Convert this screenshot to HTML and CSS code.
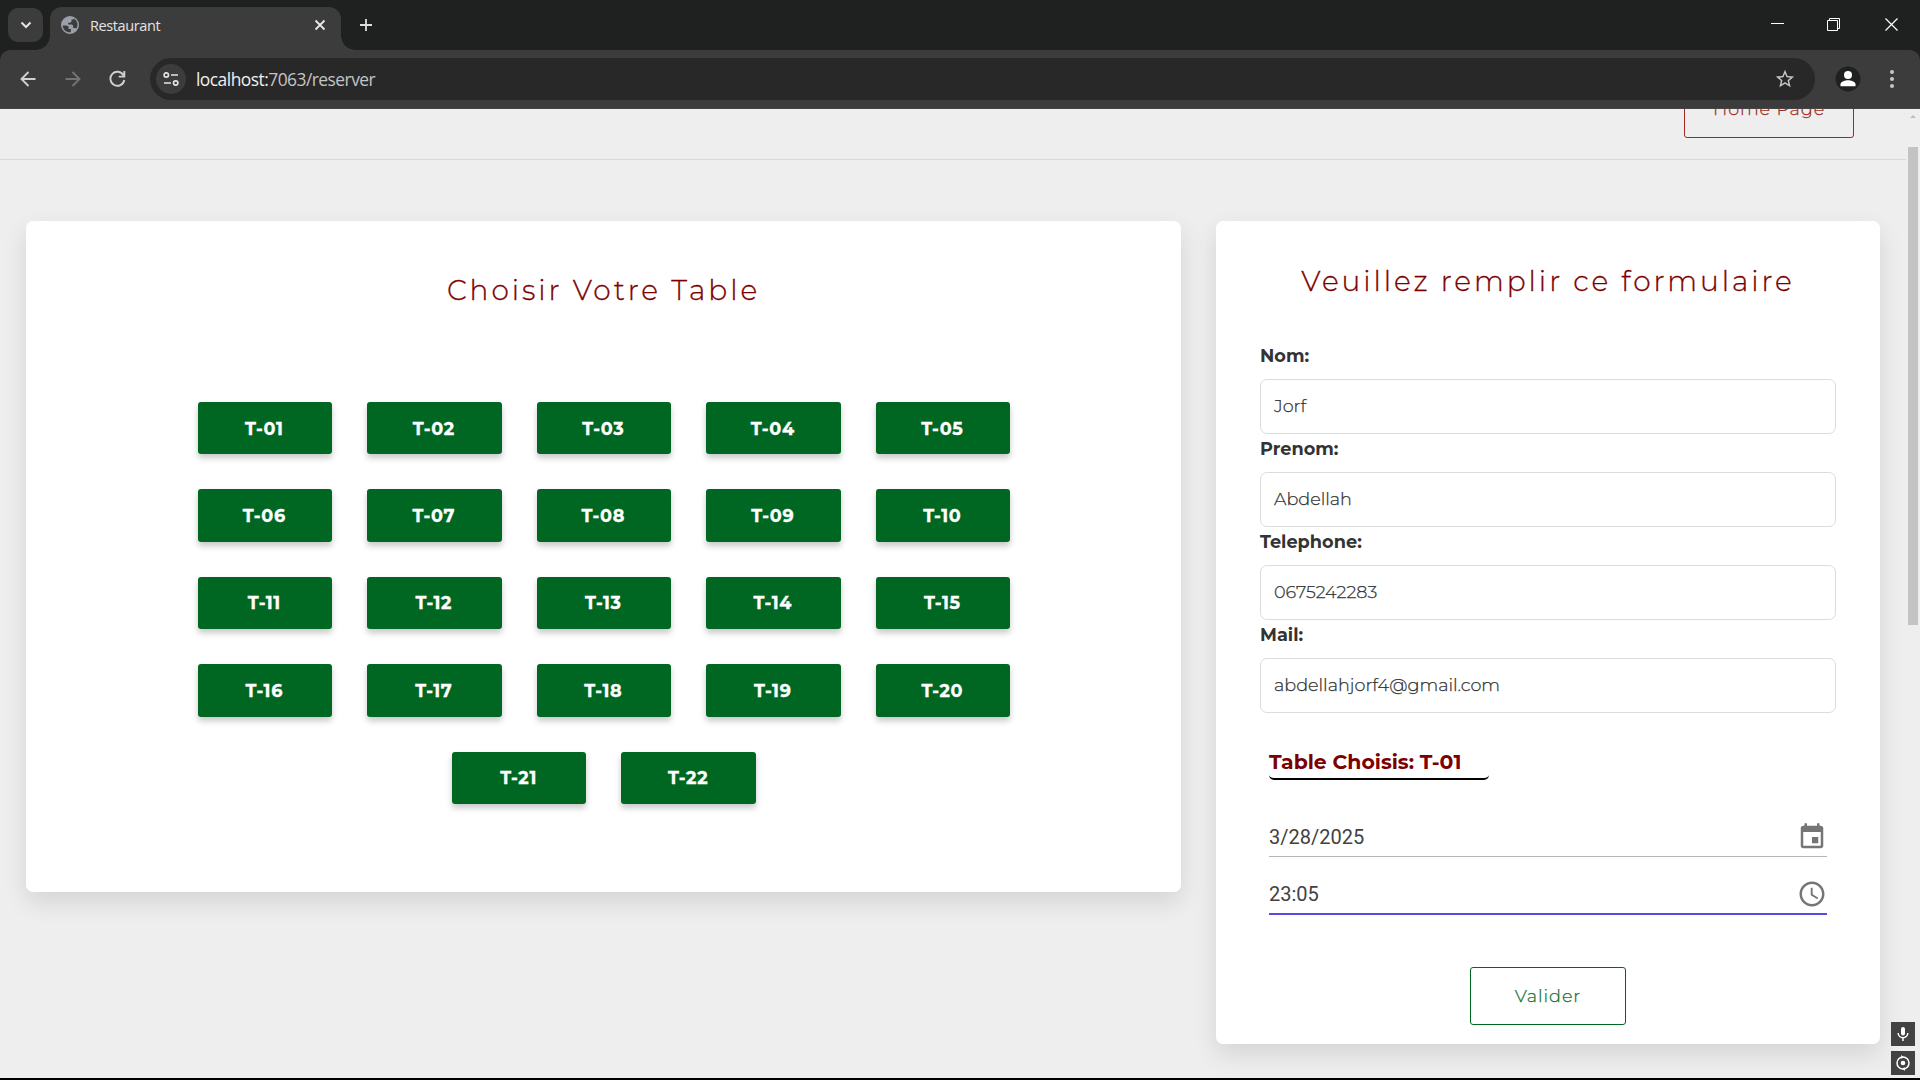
FILE: index.html
```html
<!DOCTYPE html>
<html lang="fr">
<head>
<meta charset="utf-8">
<title>Restaurant</title>
<link rel="stylesheet" href="styles.css">
</head>
<body>
<header class="browser">
  <div class="tabstrip">
    <div class="tab-search"><svg width="12" height="8" viewBox="0 0 12 8"><path d="M1.500 1.500 6 6l4.500-4.500" fill="none" stroke="#e3e3e3" stroke-width="2"/></svg></div>
    <div class="tab">
      <svg width="18" height="18" viewBox="0 0 24 24"><path fill="#9aa0a9" d="M12 0a12 12 0 1 0 0 24 12 12 0 0 0 0-24zM2.300 12.500h4.200c2.500 0 3.700 1 3.700 3.200v1.500h3v4.400c-.4.060-.8.100-1.200.100-5.200 0-9.400-4-9.700-9.200zM20.500 16.700c-.5-.5-1.300-.7-2-.7h-2.300v-2.300c0-1.300-1-2.300-2.300-2.300H9.500V9h2.300C13 9 14 8 14 6.800V4.500h1.500c.9 0 1.600-.6 1.900-1.300a9.800 9.800 0 0 1 3.100 13.500z"/></svg>
      <span class="tab-title">Restaurant</span>
      <svg class="tab-close" width="12" height="12" viewBox="0 0 12 12"><path d="M1.500 1.500l9 9m0-9l-9 9" stroke="#e8e8e8" stroke-width="1.800"/></svg>
    </div>
    <svg class="new-tab" width="14" height="14" viewBox="0 0 14 14"><path d="M7 1v12M1 7h12" stroke="#dedede" stroke-width="1.800"/></svg>
    <div class="window-buttons">
      <svg width="13" height="13" viewBox="0 0 13 13"><path d="M0 5.500h13" stroke="#fff"/></svg>
      <svg width="13" height="13" viewBox="0 0 13 13"><path d="M.5 2.500h10v10H.500zM2.500 2.500v-2h10v10h-2" fill="none" stroke="#fff"/></svg>
      <svg width="13" height="13" viewBox="0 0 13 13"><path d="M.5.5l12 12m0-12l-12 12" stroke="#fff" stroke-width="1.200"/></svg>
    </div>
  </div>
  <div class="toolbar">
    <svg width="16" height="16" viewBox="0 0 16 16"><path d="M15.500 8H1.800M8.500 1 1.500 8l7 7" fill="none" stroke="#d0d0d0" stroke-width="1.900"/></svg>
    <svg width="16" height="16" viewBox="0 0 16 16"><path d="M.5 8h13.700M7.500 1l7 7-7 7" fill="none" stroke="#747474" stroke-width="1.900"/></svg>
    <svg width="17" height="17" viewBox="0 0 17 17"><path d="M14.500 5.300A7 7 0 1 0 15.300 10M15.300 1v5.600H9.700" fill="none" stroke="#d0d0d0" stroke-width="1.900"/></svg>
    <div class="address">
      <div class="site-info"><svg width="16" height="14" viewBox="0 0 16 14"><g fill="none" stroke="#e3e3e3" stroke-width="1.700"><circle cx="3.300" cy="3" r="2.200"/><circle cx="12.700" cy="11" r="2.200"/><path d="M8 3h7M1 11h7"/></g></svg></div>
      <span class="url">localhost:<span class="url-path">7063/reserver</span></span>
      <svg class="star" width="22" height="22" viewBox="0 0 24 24"><path d="M22 9.240l-7.190-.620L12 2 9.190 8.630 2 9.240l5.460 4.730L5.820 21 12 17.270 18.180 21l-1.630-7.030L22 9.240zM12 15.400l-3.760 2.270 1-4.280-3.320-2.880 4.380-.380L12 6.100l1.710 4.040 4.380.380-3.320 2.880 1 4.280L12 15.400z" fill="#c7c7c7"/></svg>
    </div>
    <svg class="profile" width="26" height="26" viewBox="0 0 26 26"><circle cx="13" cy="13" r="12.500" fill="#1f2120"/><circle cx="13" cy="9" r="4" fill="#fff"/><path d="M5.500 20.200v-2c0-2.700 5-4 7.500-4s7.500 1.300 7.500 4v2z" fill="#fff"/></svg>
    <svg class="menu" width="4" height="18" viewBox="0 0 4 18" fill="#c7c7c7"><circle cx="2" cy="2" r="2"/><circle cx="2" cy="9" r="2"/><circle cx="2" cy="16" r="2"/></svg>
  </div>
</header>
<main class="page">
  <nav class="topbar"><a class="home">Home Page</a></nav>
  <div class="columns">
    <section class="card tables">
      <h2 class="title title-tables">Choisir Votre Table</h2>
      <div class="table-list">
        <button class="table-btn">T-01</button><button class="table-btn">T-02</button><button class="table-btn">T-03</button><button class="table-btn">T-04</button><button class="table-btn">T-05</button>
        <button class="table-btn">T-06</button><button class="table-btn">T-07</button><button class="table-btn">T-08</button><button class="table-btn">T-09</button><button class="table-btn">T-10</button>
        <button class="table-btn">T-11</button><button class="table-btn">T-12</button><button class="table-btn">T-13</button><button class="table-btn">T-14</button><button class="table-btn">T-15</button>
        <button class="table-btn">T-16</button><button class="table-btn">T-17</button><button class="table-btn">T-18</button><button class="table-btn">T-19</button><button class="table-btn">T-20</button>
        <button class="table-btn">T-21</button><button class="table-btn">T-22</button>
      </div>
    </section>
    <section class="card form">
      <h2 class="title title-form">Veuillez remplir ce formulaire</h2>
      <div class="fields">
        <div class="field"><span class="label">Nom:</span><div class="input">Jorf</div></div>
        <div class="field"><span class="label">Prenom:</span><div class="input">Abdellah</div></div>
        <div class="field"><span class="label">Telephone:</span><div class="input">0675242283</div></div>
        <div class="field"><span class="label">Mail:</span><div class="input">abdellahjorf4@gmail.com</div></div>
      </div>
      <div class="chosen">Table Choisis: T-01</div>
      <div class="picker"><span>3/28/2025</span><svg width="30" height="30" viewBox="0 0 24 24"><path fill="#757575" d="M17 12h-5v5h5v-5zM16 1v2H8V1H6v2H5c-1.110 0-1.990.9-1.990 2L3 19c0 1.100.890 2 2 2h14c1.100 0 2-.9 2-2V5c0-1.100-.9-2-2-2h-1V1h-2zm3 18H5V8h14v11z"/></svg></div>
      <div class="picker picker-active"><span>23:05</span><svg width="30" height="30" viewBox="0 0 24 24"><path fill="#757575" d="M11.990 2C6.470 2 2 6.480 2 12s4.470 10 9.990 10C17.520 22 22 17.520 22 12S17.520 2 11.990 2zM12 20c-4.420 0-8-3.580-8-8s3.580-8 8-8 8 3.580 8 8-3.580 8-8 8zm.5-13H11v6l5.250 3.150.750-1.230-4.500-2.670z"/></svg></div>
      <button class="submit">Valider</button>
    </section>
  </div>
  <div class="scrollbar"><span class="scroll-up"></span><span class="thumb"></span></div>
  <div class="capture">
    <div class="capture-btn"><svg width="12" height="16" viewBox="0 0 12 16"><rect x="4" y="1" width="4" height="8.500" rx="2" fill="#fff"/><path d="M1.200 7c0 6.200 9.600 6.200 9.600 0M6 11.500V15" fill="none" stroke="#fff" stroke-width="1.500"/></svg></div>
    <div class="capture-btn"><svg width="18" height="18" viewBox="0 0 18 18"><circle cx="9" cy="9" r="6" fill="none" stroke="#fff" stroke-width="1.500"/><circle cx="9" cy="9" r="2.300" fill="#fff"/><path d="M7 1l2.500 2L7.500 5zM11 17l-2.500-2 2-2z" fill="#fff"/></svg></div>
  </div>
</main>
</body>
</html>
```
FILE: styles.css
```css
* { box-sizing: border-box; }
body {
  margin: 0;
  width: 1920px;
  height: 1080px;
  overflow: hidden;
  display: flex;
  flex-direction: column;
  background: #eeeeee;
  font-family: "Montserrat", Inter, sans-serif;
}
svg { display: block; flex: none; }
button { font-family: inherit; }

.browser {
  flex: none;
  height: 109px;
  background: #1f2120;
  font-family: "Segoe UI", "Open Sans", sans-serif;
}
.tabstrip { height: 50px; display: flex; padding-left: 8px; }
.tab-search {
  width: 35px; height: 34px; margin-top: 8px;
  border-radius: 10px; background: #3c3c3c;
  display: flex; align-items: center; justify-content: center;
}
.tab {
  position: relative;
  width: 291px; height: 43px; margin: 7px 0 0 7px; padding: 0 15px 7px 11px;
  border-radius: 12px 12px 0 0; background: #3c3c3c;
  display: flex; align-items: center;
}
.tab::before, .tab::after {
  content: ""; position: absolute; bottom: 0; width: 14px; height: 14px;
}
.tab::before { left: -14px; background: radial-gradient(circle at 0 0, transparent 13.5px, #3c3c3c 14px); }
.tab::after { right: -14px; background: radial-gradient(circle at 100% 0, transparent 13.5px, #3c3c3c 14px); }
.tab-title { margin-left: 11px; font-size: 14.5px; letter-spacing: -0.4px; color: #e3e3e3; }
.tab-close { margin-left: auto; }
.new-tab { margin: 18px 0 0 18px; }
.window-buttons { display: flex; gap: 43px; margin: 18px 22px 0 auto; }
.window-buttons svg:last-child { margin-left: 2px; }

.toolbar {
  height: 59px; padding: 0 26px 1px 20px;
  display: flex; align-items: center;
  background: #3c3c3c; border-bottom: 1px solid #454345;
  border-radius: 10px 10px 0 0;
}
.toolbar > svg:nth-child(2) { margin-left: 29px; }
.toolbar > svg:nth-child(3) { margin-left: 28px; }
.address {
  width: 1665px; height: 42px; margin-left: 24px; padding: 0 19px 0 6px;
  border-radius: 21px; background: #282828;
  display: flex; align-items: center;
}
.site-info {
  width: 30px; height: 30px; border-radius: 50%; background: #3c3c3c;
  display: flex; align-items: center; justify-content: center;
}
.url { margin-left: 10px; padding-top: 1px; font-size: 17.4px; letter-spacing: -0.52px; color: #f0f0f0; }
.url-path { color: #c4c4c4; }
.star { margin-left: auto; }
.profile { margin-left: 20px; }
.menu { margin-left: auto; }

.page { position: relative; flex: 1; min-height: 0; overflow: hidden; border-bottom: 2px solid #000; }
.topbar {
  width: 1906px; height: 51px; padding-right: 52px;
  display: flex; justify-content: flex-end; align-items: flex-end;
  border-bottom: 1px solid #e6d3d8;
}
.home {
  width: 170px; height: 58px; margin-bottom: 21px; padding-top: 2px;
  border: 1px solid #a02a20; border-radius: 3px;
  color: #a02a20; font-size: 17.600px; font-weight: 300; line-height: 52px; letter-spacing: 0.900px; text-align: center;
  -webkit-text-stroke: 0.250px currentColor;
}
.columns { display: flex; align-items: flex-start; gap: 35px; padding: 61px 0 0 26px; }
.card {
  border-radius: 7px; background: #fff;
  box-shadow: 0 10px 24px rgba(0, 0, 0, 0.11);
  display: flex; flex-direction: column;
}
.tables { width: 1155px; height: 671px; padding-top: 49px; align-items: center; }
.title {
  margin: 0; color: #7d0000; font-size: 28px; font-weight: 300; line-height: 40px; letter-spacing: 2.950px; white-space: nowrap;
  -webkit-text-stroke: 0.300px currentColor;
}
.title-form { text-align: center; }
.table-list { width: 850px; margin-top: 92px; padding-left: 0.700px; display: flex; flex-wrap: wrap; justify-content: center; gap: 35px; }
.table-btn {
  width: 134.500px; height: 52.400px; padding: 0 1px 0 0; border: 0; border-radius: 3px;
  background: #006722; color: #fff; font-size: 17.600px; font-weight: 700; letter-spacing: 0.700px;
  -webkit-text-stroke: 0.300px currentColor;
  box-shadow: 0 4px 6px rgba(0, 0, 0, 0.22);
}

.form { width: 664px; height: 823px; padding: 40px 44px 0; }
.fields { margin-top: 42px; display: flex; flex-direction: column; gap: 2.500px; }
.label { display: block; margin-bottom: 11px; color: #333; font-size: 17.700px; font-weight: 700; line-height: 25px; }
.input {
  height: 54.500px; padding-left: 13px; border: 1px solid #dcdcdc; border-radius: 7px;
  color: #333; font-size: 17.600px; font-weight: 300; line-height: 52px;
  -webkit-text-stroke: 0.250px currentColor;
}
.chosen {
  width: 220px; height: 36px; margin: 31px 0 0 9px; line-height: 36px;
  border-bottom: 2px solid #000; border-radius: 5px;
  color: #7d0000; font-size: 20.400px; font-weight: 700; white-space: nowrap;
}
.picker {
  height: 39px; margin: 38px 9px 0; border-bottom: 1px solid #b5b5b5;
  display: flex; align-items: center; justify-content: space-between;
  color: #424242; font-family: Roboto, sans-serif; font-size: 20px;
}
.picker span { padding-top: 1px; }
.picker-active { height: 40px; margin-top: 18px; border-bottom: 2px solid #594ae2; }
.submit {
  width: 156px; height: 58px; margin-top: 52px; padding: 0; align-self: center;
  border: 1px solid #006722; border-radius: 3px; background: #fff;
  color: #12732f; font-size: 17.600px; font-weight: 300; letter-spacing: 0.950px;
  -webkit-text-stroke: 0.250px currentColor;
}

.scrollbar { position: absolute; top: 0; right: 0; width: 14px; height: 100%; }
.scroll-up {
  position: absolute; left: 4px; top: 6px;
  border: 3.500px solid transparent; border-top: 0; border-bottom: 3px solid #bdbdbd;
}
.thumb { position: absolute; left: 2px; top: 38px; width: 10px; height: 478px; background: #c3c3c3; }
.capture { position: absolute; right: 5px; bottom: 3px; display: flex; flex-direction: column; gap: 5px; }
.capture-btn { width: 24px; height: 24px; background: #424242; display: flex; align-items: center; justify-content: center; }
```
